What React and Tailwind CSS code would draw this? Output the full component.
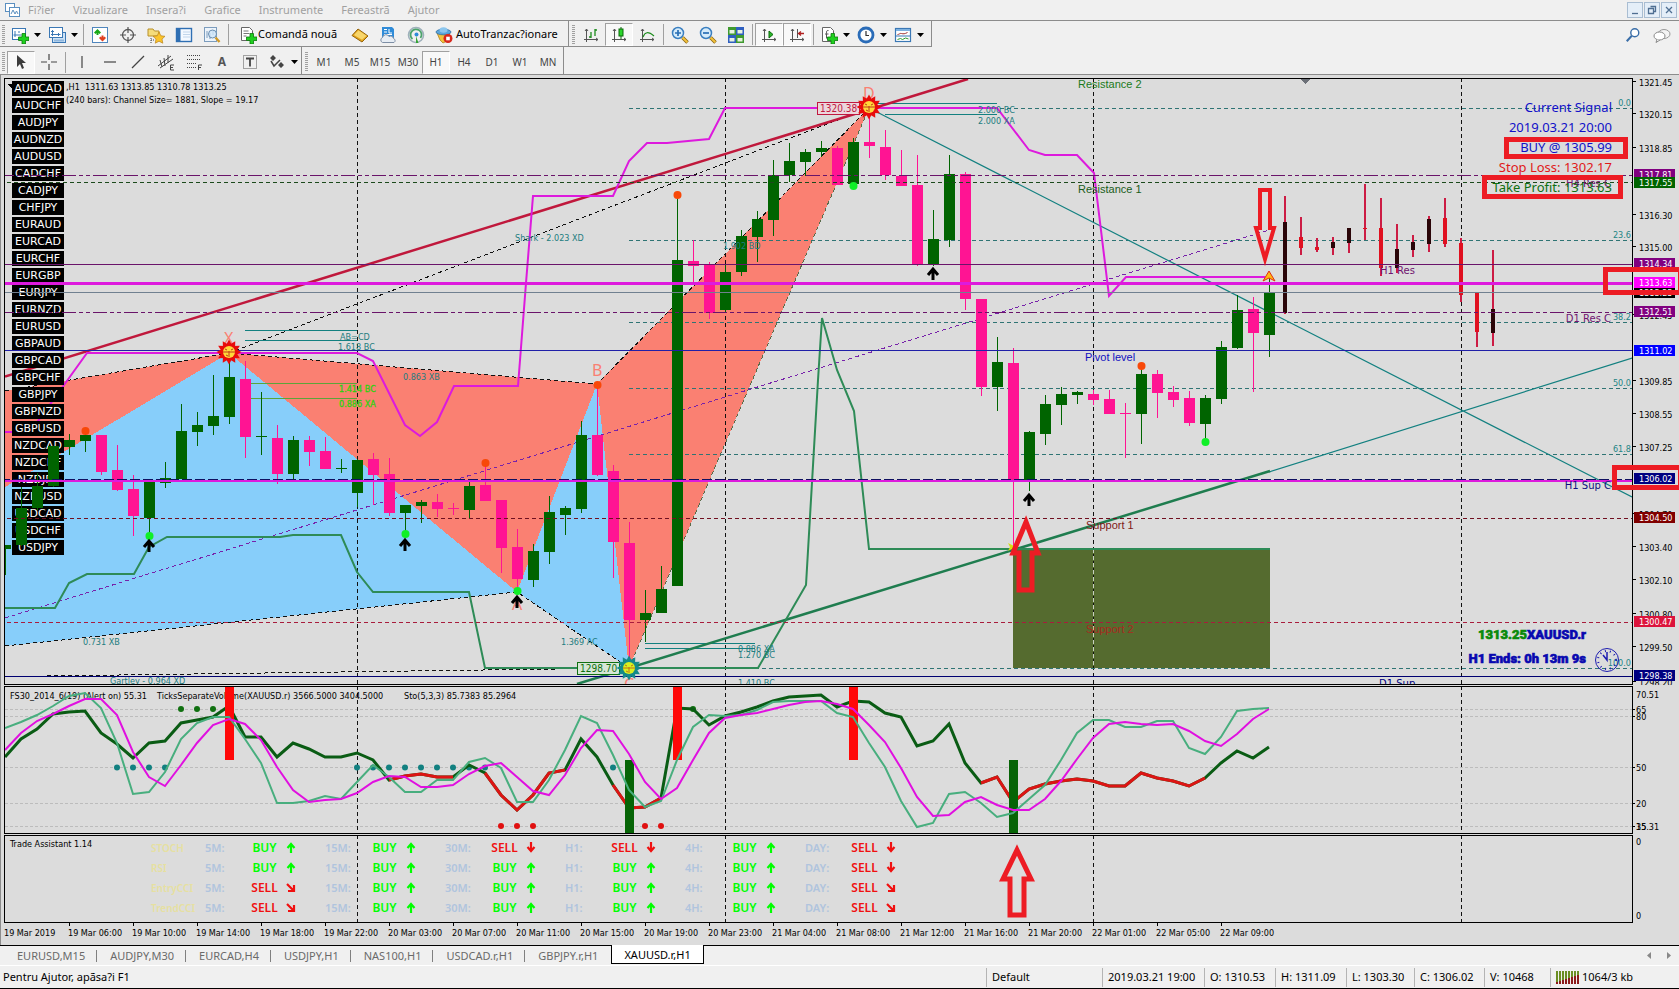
import React, { useState } from 'react';

const SYMBOLS = [
  'AUDCAD', 'AUDCHF', 'AUDJPY', 'AUDNZD', 'AUDUSD', 'CADCHF', 'CADJPY', 'CHFJPY', 'EURAUD', 'EURCAD',
  'EURCHF', 'EURGBP', 'EURJPY', 'EURNZD', 'EURUSD', 'GBPAUD', 'GBPCAD', 'GBPCHF', 'GBPJPY', 'GBPNZD',
  'GBPUSD', 'NZDCAD', 'NZDCHF', 'NZDJPY', 'NZDUSD', 'USDCAD', 'USDCHF', 'USDJPY',
];

const MENU = ['Fi?ier', 'Vizualizare', 'Insera?i', 'Grafice', 'Instrumente', 'Fereastrã', 'Ajutor'];
const TIMEFRAMES = ['M1', 'M5', 'M15', 'M30', 'H1', 'H4', 'D1', 'W1', 'MN'];
const TABS = ['EURUSD,M15', 'AUDJPY,M30', 'EURCAD,H4', 'USDJPY,H1', 'NAS100,H1', 'USDCAD.r,H1', 'GBPJPY.r,H1', 'XAUUSD.r,H1'];

const DATES = [
  '19 Mar 2019', '19 Mar 06:00', '19 Mar 10:00', '19 Mar 14:00', '19 Mar 18:00', '19 Mar 22:00',
  '20 Mar 03:00', '20 Mar 07:00', '20 Mar 11:00', '20 Mar 15:00', '20 Mar 19:00', '20 Mar 23:00',
  '21 Mar 04:00', '21 Mar 08:00', '21 Mar 12:00', '21 Mar 16:00', '21 Mar 20:00',
  '22 Mar 01:00', '22 Mar 05:00', '22 Mar 09:00',
];

// one candle per bar: [high, body top, body bottom, low, bullish]
const CANDLES = [
  [545, 545, 549, 575, 1], [487, 508, 545, 546, 1], [473, 486, 508, 510, 1], [446, 446, 486, 487, 1],
  [434, 440, 447, 455, 1], [432, 435, 441, 452, 1], [435, 435, 472, 475, 0], [445, 470, 490, 491, 0],
  [475, 489, 516, 536, 0], [482, 482, 518, 533, 1], [462, 478, 483, 488, 1], [404, 431, 479, 479, 1],
  [412, 425, 432, 446, 1], [375, 416, 426, 435, 1], [348, 377, 417, 424, 1], [361, 379, 437, 458, 0],
  [392, 436, 437, 455, 1], [425, 438, 474, 484, 0], [436, 440, 474, 479, 1], [436, 440, 452, 466, 0],
  [437, 451, 469, 469, 0], [459, 468, 469, 473, 1], [459, 460, 493, 507, 1], [453, 459, 475, 505, 0],
  [458, 474, 513, 516, 0], [505, 505, 513, 535, 1], [500, 502, 506, 523, 1], [494, 502, 509, 517, 0],
  [503, 508, 509, 515, 0], [481, 486, 510, 519, 1], [463, 485, 501, 501, 0], [500, 500, 548, 573, 0],
  [529, 547, 579, 593, 0], [544, 551, 580, 587, 1], [496, 512, 552, 564, 1], [506, 508, 515, 535, 1],
  [421, 435, 509, 513, 1], [385, 435, 475, 476, 0], [465, 471, 542, 578, 0], [522, 543, 620, 665, 0],
  [590, 613, 620, 642, 1], [566, 589, 613, 613, 1], [198, 260, 586, 586, 1], [240, 261, 266, 282, 0],
  [262, 264, 313, 319, 0], [265, 272, 310, 313, 1], [230, 236, 272, 276, 1], [211, 219, 237, 262, 1],
  [160, 175, 220, 236, 1], [143, 161, 175, 182, 1], [149, 152, 162, 176, 1], [141, 148, 152, 157, 1],
  [146, 148, 185, 185, 0], [138, 142, 184, 185, 1], [112, 142, 146, 158, 0], [130, 147, 175, 180, 0],
  [150, 176, 186, 186, 0], [155, 185, 265, 266, 0], [210, 239, 265, 266, 1], [155, 174, 240, 247, 1],
  [172, 174, 299, 310, 0], [299, 299, 387, 396, 0], [337, 362, 387, 411, 1], [348, 363, 481, 547, 0],
  [431, 432, 481, 491, 1], [395, 404, 434, 445, 1], [387, 394, 405, 425, 1], [391, 392, 395, 404, 1],
  [390, 394, 400, 405, 0], [390, 399, 414, 414, 0], [403, 413, 414, 458, 0], [367, 374, 414, 444, 1],
  [370, 374, 393, 418, 0], [386, 392, 400, 407, 0], [391, 398, 423, 426, 0], [395, 398, 424, 442, 1],
  [341, 347, 399, 404, 1], [295, 310, 348, 349, 1], [297, 309, 333, 392, 0], [275, 292, 335, 357, 1],
];

// [high, body top, body bottom, low, black body]
const FORECAST = [
  [196, 222, 313, 314, 1], [217, 237, 248, 255, 0], [238, 247, 250, 252, 0], [237, 242, 248, 255, 1],
  [228, 228, 243, 253, 1], [184, 228, 229, 240, 0], [198, 228, 268, 276, 0], [224, 249, 268, 273, 1],
  [235, 242, 250, 257, 1], [216, 219, 244, 252, 1], [198, 218, 244, 247, 0], [238, 243, 295, 302, 0],
  [293, 293, 332, 347, 0], [250, 309, 333, 346, 1],
];

const STOCH_MAIN = [
  728, 722, 715, 706, 696, 693, 708, 743, 794, 792, 772, 739, 723, 717, 717, 739, 763, 803, 803, 801,
  796, 799, 782, 765, 777, 792, 792, 780, 780, 762, 758, 768, 802, 802, 780, 750, 716, 723, 755, 790,
  807, 801, 760, 727, 715, 716, 715, 710, 702, 701, 701, 701, 713, 717, 743, 767, 801, 827, 823, 794,
  792, 803, 817, 813, 799, 785, 760, 733, 720, 720, 727, 727, 721, 721, 748, 754, 737, 711, 709, 708,
];

const STOCH_SIGNAL = [
  750, 733, 721, 714, 706, 699, 699, 715, 752, 777, 786, 765, 743, 725, 719, 724, 740, 767, 790, 802,
  800, 799, 793, 782, 776, 777, 787, 787, 785, 774, 766, 763, 777, 791, 795, 775, 748, 730, 731, 754,
  782, 799, 788, 760, 733, 718, 715, 713, 709, 705, 702, 701, 704, 709, 725, 742, 768, 797, 816, 815,
  802, 797, 805, 810, 810, 799, 781, 759, 738, 724, 722, 724, 725, 724, 731, 741, 746, 734, 719, 709,
];

const FS30 = [
  757, 739, 729, 714, 712, 711, 733, 744, 758, 743, 741, 723, 720, 717, 706, 737, 737, 757, 743, 749,
  757, 757, 753, 760, 780, 776, 774, 777, 777, 765, 773, 795, 810, 795, 773, 770, 739, 757, 785, 808,
  807, 798, 708, 709, 725, 716, 712, 707, 701, 697, 696, 695, 707, 701, 702, 713, 717, 746, 741, 724,
  763, 783, 777, 802, 789, 784, 781, 779, 781, 786, 786, 773, 778, 781, 786, 778, 763, 751, 758, 747,
];
// bar ranges where the FS30 line turns red
const FS30_RED = [[24, 28], [30, 35], [38, 41], [61, 75]];

const PRICES = [
  ['1321.45', 82], ['1320.15', 114], ['1318.85', 148], ['1316.30', 215], ['1315.00', 247], ['1312.45', 315],
  ['1309.85', 381], ['1308.55', 414], ['1307.25', 447], ['1304.70', 514], ['1303.40', 547], ['1302.10', 580],
  ['1300.80', 614], ['1299.50', 647], ['1298.20', 682],
];

const PRICE_BADGES = [
  ['1317.81', 174, '#800080'], ['1317.55', 182, '#006400'], ['1314.34', 263, '#800080'],
  ['1313.25', 292, '#000000'], ['1313.63', 282, '#ff00ff'], ['1312.51', 311, '#800080'],
  ['1311.02', 350, '#0000ff'], ['1306.02', 478, '#000080'], ['1304.50', 517, '#800000'],
  ['1300.47', 621, '#dc143c'], ['1298.38', 675, '#000080'],
];

const FIB = [['0.0', 108], ['23.6', 240], ['38.2', 322], ['50.0', 388], ['61.8', 454], ['100.0', 668]];

const PATTERN_LABELS = [
  ['AB=CD', 340, 340], ['1.618 BC', 338, 350], ['Shark - 2.023 XD', 515, 241], ['1.902 BD', 723, 249],
  ['0.731 XB', 83, 645], ['Gartley - 0.964 XD', 110, 684], ['1.369 AC', 561, 645], ['0.886 XA', 738, 652],
  ['1.270 BC', 738, 658], ['1.410 BC', 738, 686], ['2.000 BC', 978, 113], ['2.000 XA', 978, 124], ['0.863 XB', 403, 380],
];

const ASSISTANT = [
  ['STOCH', ['up', 'up', 'down', 'down', 'up', 'down']],
  ['RSI', ['up', 'up', 'up', 'up', 'up', 'down']],
  ['EntryCCI', ['drop', 'up', 'up', 'up', 'up', 'drop']],
  ['TrendCCI', ['drop', 'up', 'up', 'up', 'up', 'drop']],
];
const PERIODS = ['5M:', '15M:', '30M:', 'H1:', '4H:', 'DAY:'];

const DAY_LINES = [357, 725, 1093, 1461];

const barX = (i) => 5 + i * 16;
const series = (values, from = 0) => values.map((y, i) => `${barX(from + i)},${y}`).join(' ');

const chartFont = "font-['DejaVu_Sans_Condensed','Noto_Sans',sans-serif]";

/* ---------- toolbar ---------- */

const Grip = () => (
  <span className="w-[3px] h-5 mx-[2px] shrink-0 bg-[repeating-linear-gradient(#a0a0a0_0_1px,transparent_1px_2px)]" />
);
const Sep = () => <span className="w-px h-[21px] mx-[2px] shrink-0 bg-[#a0a0a0]" />;
const Caret = () => (
  <svg width="7" height="4" viewBox="0 0 7 4"><path d="M0 0h7L3.500 4z" fill="#000" /></svg>
);

const Tool = ({ label, pressed, wide, children }) => (
  <button
    type="button"
    aria-label={label}
    className={`h-[23px] shrink-0 flex items-center justify-center gap-[5px] ${wide ? 'w-[37px]' : 'w-7'} ${
      pressed ? 'bg-[#f8f8f8] border border-t-[#a0a0a0] border-l-[#a0a0a0] border-b-white border-r-white' : ''
    }`}
  >
    {children}
  </button>
);

const Svg = ({ size = 18, children }) => (
  <svg width={size} height={size} viewBox="0 0 18 18" fill="none" className="shrink-0">{children}</svg>
);

const Plus = () => (
  <path d="M11 7.500h3.500v3.500H18v3.500h-3.500V18H11v-3.500H7.500V11H11z" fill="#1fd01f" stroke="#0b7a0b" strokeWidth="0.800" />
);

const NewChartIcon = () => (
  <Svg>
    <rect x="1.500" y="2.500" width="13" height="11" fill="#fff" stroke="#3b78b5" />
    <path d="M4 5v6M2.500 9h8M8 5v2" stroke="#3b78b5" />
    <Plus />
  </Svg>
);
const ProfilesIcon = () => (
  <Svg>
    <rect x="4.500" y="6.500" width="13" height="10" fill="#cfe3f6" stroke="#3b78b5" />
    <path d="M6 14.500h10" stroke="#8fb6dd" strokeWidth="2" />
    <rect x="1.500" y="1.500" width="13" height="10" fill="#fff" stroke="#3b78b5" />
    <path d="M4.500 4v6M3 8.500h9.500M10.500 7v3M3 5.500h3" stroke="#3b78b5" />
  </Svg>
);
const MarketIcon = () => (
  <Svg>
    <rect x="1.500" y="1.500" width="15" height="15" fill="#fff" stroke="#4f86bd" />
    <path d="M6.500 3l3.500 3.500-1.500 1.500-1-1v2h-2V7l-1 1L3 6.500z" fill="#18a818" />
    <path d="M11.500 15.500L8 12l1.500-1.500 1 1v-2h2v2l1-1L15 12z" fill="#e04020" />
  </Svg>
);
const AimIcon = () => (
  <Svg>
    <circle cx="9" cy="9" r="5.500" stroke="#555" strokeWidth="1.300" />
    <path d="M9 1v6M9 11v6M1 9h6M11 9h6" stroke="#555" strokeWidth="1.200" />
  </Svg>
);
const FavIcon = () => (
  <Svg>
    <path d="M1 3h5l1.500 2H12v5H1z" fill="#f5dc7a" stroke="#b8902a" />
    <path d="M4 12v5M4 14h3" stroke="#444" strokeDasharray="1 1" />
    <path d="M12 6l1.900 3.800 4.100.5-3 2.800.8 4.100L12 15.200 8.300 17.200l.7-4.100-3-2.800 4.200-.5z" fill="#fbc42a" stroke="#b9821a" strokeWidth="0.700" />
  </Svg>
);
const NavIcon = () => (
  <Svg>
    <rect x="1.500" y="2.500" width="15" height="13" fill="#f4f9ff" stroke="#2f6fb3" strokeWidth="1.400" />
    <path d="M2 3h3.500v12H2z" fill="#2f6fb3" />
    <path d="M8 6h7M8 8.500h7M8 11h7" stroke="#b5cde6" strokeWidth="0.800" />
  </Svg>
);
const TesterIcon = () => (
  <Svg>
    <rect x="1.500" y="1.500" width="12" height="14" fill="#edf4fb" stroke="#7c9cbd" />
    <path d="M4 12V5M7 13V7M10 9V4" stroke="#7c9cbd" />
    <circle cx="9.500" cy="8" r="4" fill="#cfe6fa" fillOpacity="0.800" stroke="#6a8db0" />
    <path d="M12.500 11.500l4 4.500" stroke="#d09a2a" strokeWidth="2.400" />
  </Svg>
);
const OrderIcon = () => (
  <Svg>
    <path d="M2.500 1.500h8l3 3v10h-11z" fill="#fff" stroke="#666" />
    <path d="M4.500 5h5M4.500 7.500h6M4.500 10h3" stroke="#777" />
    <Plus />
  </Svg>
);
const BookIcon = () => (
  <Svg>
    <path d="M1 9.500L7 3l10 7-6 6z" fill="#e3a41c" stroke="#94640c" />
    <path d="M3 9L7.500 4.200l8 5.600-4.500 4z" fill="#f8d66b" />
  </Svg>
);
const CloudIcon = () => (
  <Svg>
    <path d="M3 1h10l2 2v9H3z" fill="#2f8bd8" />
    <path d="M5 3.500h3M5 6h3M5 8.500h8M10 3v4h3" stroke="#fff" />
    <path d="M3.500 16.500a2.700 2.700 0 010-5 3.500 3.500 0 016.500-1 3 3 0 014.500 2 2.200 2.200 0 01.5 4z" fill="#e7edf4" stroke="#7d8ea5" />
  </Svg>
);
const SignalIcon = () => (
  <Svg>
    <circle cx="9" cy="9" r="7.500" stroke="#9fb0bb" strokeWidth="1.600" />
    <path d="M5.500 13a5.500 5.500 0 118-1" stroke="#4aa36a" strokeWidth="1.800" />
    <circle cx="9.500" cy="8.500" r="2" fill="#2f8bd8" />
    <path d="M9 10l2.500 7H9z" fill="#35a435" />
  </Svg>
);
const RobotIcon = () => (
  <Svg>
    <path d="M2 7h13l-3 8-4 2-3-3z" fill="#f2c23c" stroke="#b3831c" strokeWidth="0.800" />
    <ellipse cx="8.500" cy="6" rx="7.500" ry="2.800" fill="#5aa5dc" stroke="#2e6fa5" strokeWidth="0.800" />
    <ellipse cx="8.500" cy="4" rx="4" ry="2.700" fill="#8cc6ee" />
    <circle cx="13" cy="12.500" r="4.500" fill="#d8281c" />
    <rect x="11.200" y="10.700" width="3.600" height="3.600" fill="#fff" />
  </Svg>
);
const AxisIcon = ({ children }) => (
  <Svg>
    <path d="M4.500 3v13M2 13.500h14M4.500 3l-1.500 2M4.500 3l1.500 2M16 13.500l-2-1.500M16 13.500l-2 1.500" stroke="#555" />
    {children}
  </Svg>
);
const ZoomIcon = ({ plus }) => (
  <Svg>
    <path d="M11.500 11.500l5 5" stroke="#8a6510" strokeWidth="3.600" />
    <path d="M11.500 11.500l4.800 4.800" stroke="#f2c23c" strokeWidth="2" />
    <circle cx="7" cy="7" r="5.500" fill="#d6ecfb" stroke="#3a7fc0" strokeWidth="1.500" />
    <path d={plus ? 'M4 7h6M7 4v6' : 'M4 7h6'} stroke="#2a6fb5" strokeWidth="1.700" />
  </Svg>
);
const TileIcon = () => (
  <Svg>
    <rect x="1" y="1" width="8" height="8" fill="#3f9a2f" />
    <rect x="9" y="1" width="8" height="8" fill="#2f5fc0" />
    <rect x="1" y="9" width="8" height="8" fill="#2f5fc0" />
    <rect x="9" y="9" width="8" height="8" fill="#3f9a2f" />
    <path d="M2.500 4h5v3.500h-5zM10.500 4h5v3.500h-5zM2.500 12h5v3.500h-5zM10.500 12h5v3.500h-5z" fill="#e8f2e0" />
  </Svg>
);
const IndicatorIcon = () => (
  <Svg>
    <path d="M2.500 1.500h8l3 3v11h-11z" fill="#fff" stroke="#666" />
    <path d="M8.500 4.500c-2-.5-2 1-2 3v5M5 8h3.500" stroke="#555" />
    <Plus />
  </Svg>
);
const ClockIcon = () => (
  <Svg>
    <circle cx="9" cy="9" r="7" fill="#fff" stroke="#2a6cb8" strokeWidth="2.800" />
    <path d="M9 5v4.500h3" stroke="#333" strokeWidth="1.200" />
  </Svg>
);
const TemplateIcon = () => (
  <Svg>
    <rect x="1.500" y="2.500" width="15" height="13" fill="#fff" stroke="#3b78b5" strokeWidth="1.200" />
    <path d="M2 3h14v2H2z" fill="#7fb2e0" />
    <path d="M3.500 8.500c2 0 2-1.500 4-1s3 .5 6-1" stroke="#a03030" />
    <path d="M2 10h14" stroke="#3b78b5" />
    <path d="M3.500 13.500l3-1 2 1 3-1.500 3 1" stroke="#2f9a2f" />
  </Svg>
);

const MainToolbar = () => (
  <div className="flex h-[27px] border-t border-[#8c8c8c]">
    <div className="flex items-center border-r border-b border-[#8c8c8c] pt-[2px] pr-[6px]">
      <Grip />
      <Tool label="Grafic nou" wide><NewChartIcon /><Caret /></Tool>
      <Tool label="Profile" wide><ProfilesIcon /><Caret /></Tool>
      <Sep />
      <Tool label="Market Watch"><MarketIcon /></Tool>
      <Tool label="Data Window"><AimIcon /></Tool>
      <Tool label="Navigator"><FavIcon /></Tool>
      <Tool label="Terminal"><NavIcon /></Tool>
      <Tool label="Strategy Tester"><TesterIcon /></Tool>
      <Sep />
      <button type="button" className="flex items-center gap-px h-[23px] w-[115px] pl-2 whitespace-nowrap">
        <OrderIcon />Comandã nouã
      </button>
      <Tool label="MetaEditor"><BookIcon /></Tool>
      <Tool label="VPS"><CloudIcon /></Tool>
      <Tool label="Semnale"><SignalIcon /></Tool>
      <button type="button" className="flex items-center gap-[3px] h-[23px] w-[132px] pl-[5px] whitespace-nowrap">
        <RobotIcon />AutoTranzac?ionare
      </button>
    </div>
    <div className="flex items-center border-r border-b border-[#8c8c8c] pt-[2px] pl-px pr-1">
      <Grip />
      <Tool label="Bare"><AxisIcon><path d="M9 6v6M9 11h-2M13 3v7M13 4h2" stroke="#1c8c1c" strokeWidth="1.300" /></AxisIcon></Tool>
      <Tool label="Candele" pressed><AxisIcon><path d="M11 1v12" stroke="#0a6a0a" /><rect x="9" y="3" width="4" height="7" fill="#2bd62b" stroke="#0a6a0a" /></AxisIcon></Tool>
      <Tool label="Linie"><AxisIcon><path d="M5 11c2-5 5-6 11-1" stroke="#1c8c1c" strokeWidth="1.200" /></AxisIcon></Tool>
      <Sep />
      <Tool label="Zoom in"><ZoomIcon plus /></Tool>
      <Tool label="Zoom out"><ZoomIcon /></Tool>
      <Tool label="Mozaic"><TileIcon /></Tool>
      <Sep />
      <Tool label="Auto scroll" pressed><AxisIcon><path d="M9 5l4 3.500-4 3.500z" fill="#2bb62b" stroke="#0a6a0a" /></AxisIcon></Tool>
      <Tool label="Chart shift" pressed><AxisIcon><path d="M9.500 3v9" stroke="#555" /><path d="M16 7.500h-5M13 5.500l-2.500 2 2.500 2" stroke="#b02020" strokeWidth="1.300" /></AxisIcon></Tool>
      <Sep />
      <Tool label="Indicatori" wide><IndicatorIcon /><Caret /></Tool>
      <Tool label="Perioade" wide><ClockIcon /><Caret /></Tool>
      <Tool label="Sabloane" wide><TemplateIcon /><Caret /></Tool>
    </div>
    <div className="flex-1 flex items-center justify-end gap-3 pt-[2px] pr-2">
      <button type="button" aria-label="Cautare">
        <Svg size={16}>
          <circle cx="11" cy="6.500" r="4.500" fill="#fff" stroke="#3a6ea8" strokeWidth="1.600" />
          <path d="M7.500 10L2 16" stroke="#3a6ea8" strokeWidth="2.400" />
        </Svg>
      </button>
      <button type="button" aria-label="Mesaje">
        <Svg>
          <ellipse cx="11" cy="8" rx="6" ry="4.500" fill="#f4f4f4" stroke="#999" />
          <ellipse cx="6.500" cy="10" rx="5.500" ry="4" fill="#fff" stroke="#888" />
          <path d="M4 13.500l-1 3 4-2.500" fill="#fff" stroke="#888" />
        </Svg>
      </button>
    </div>
  </div>
);

const DrawToolbar = ({ frame, setFrame }) => (
  <div className="flex h-7 border-b border-[#8c8c8c]">
    <div className="flex items-center border-r border-[#8c8c8c] pt-[3px]">
      <Grip />
      <Tool label="Cursor" pressed><Svg><path d="M5 2v12l3-3 2 5 2-1-2-5h4z" fill="#3c3c3c" /></Svg></Tool>
      <Tool label="Reticul"><Svg><path d="M9 1v6M9 11v6M1 9h6M11 9h6" stroke="#444" strokeWidth="1.200" /></Svg></Tool>
      <Sep />
      <Tool label="Linie verticala"><Svg><path d="M9 3v12" stroke="#444" strokeWidth="1.200" /></Svg></Tool>
      <Tool label="Linie orizontala"><Svg><path d="M3 9h12" stroke="#444" strokeWidth="1.200" /></Svg></Tool>
      <Tool label="Trend"><Svg><path d="M3 15L15 3" stroke="#444" strokeWidth="1.200" /></Svg></Tool>
      <Tool label="Canal">
        <Svg>
          <path d="M1 13L14 3M3 15L16 6M3 7l2 7M7 5l1 8M11 2l0 8" stroke="#444" />
          <path d="M17 12h-3.500v5H17M13.500 14.500H16" stroke="#444" />
        </Svg>
      </Tool>
      <Tool label="Fibonacci">
        <Svg>
          <path d="M2 2.500h14M2 6.500h14M2 10.500h10M2 14.500h9" stroke="#444" strokeDasharray="1 1" />
          <path d="M13.500 17v-5H17M13.500 14.500H16" stroke="#444" />
        </Svg>
      </Tool>
      <Tool label="Text"><span className="text-[12px] font-bold text-[#555]">A</span></Tool>
      <Tool label="Eticheta">
        <Svg>
          <rect x="2.500" y="2.500" width="13" height="13" stroke="#555" strokeDasharray="1 1" />
          <path d="M5 5.500h8M9 5.500v8" stroke="#444" strokeWidth="1.800" />
        </Svg>
      </Tool>
      <Tool label="Sageti" wide>
        <Svg>
          <path d="M2 5l3-3 3 3-3 3zM10 12l3-3 3 3-3 3z" fill="#444" />
          <path d="M3 8l3 5 6-6" stroke="#444" strokeWidth="1.500" />
        </Svg>
        <Caret />
      </Tool>
    </div>
    <div className="flex items-center border-r border-[#8c8c8c] pt-[3px] pl-px pr-px">
      <Grip />
      {TIMEFRAMES.map((tf) => (
        <button
          key={tf}
          type="button"
          onClick={() => setFrame(tf)}
          className={`w-7 h-[23px] text-[10px] text-[#444] ${
            tf === frame ? 'bg-[#f8f8f8] border border-t-[#a0a0a0] border-l-[#a0a0a0] border-b-white border-r-white' : ''
          }`}
        >
          {tf}
        </button>
      ))}
    </div>
  </div>
);

/* ---------- chart pieces ---------- */

const HLine = ({ y, color, dash, width = 1, from = 0 }) => (
  <line x1={from} x2="4000" y1={y + 0.5} y2={y + 0.5} stroke={color} strokeWidth={width} strokeDasharray={dash} />
);

const DayLines = ({ y1, y2 }) => DAY_LINES.map((x) => (
  <line key={x} x1={x + 0.5} x2={x + 0.5} y1={y1} y2={y2} stroke="#111" strokeDasharray="4 3" />
));

const Candle = ({ i, data }) => {
  const [high, top, bottom, low, bull] = data;
  const x = barX(i);
  return (
    <g fill={bull ? '#006400' : '#ff1493'}>
      <rect x={x} y={high} width="1" height={Math.max(low - high, 1)} />
      <rect x={x - 5} y={top} width="11" height={bottom - top} />
    </g>
  );
};

const Sun = ({ x, y, rays = '#e80c0c', core = '#ffd83a', face = '#c03a18' }) => (
  <g transform={`translate(${x} ${y})`} shapeRendering="auto">
    {[0, 30, 60, 90, 120, 150, 180, 210, 240, 270, 300, 330].map((a) => (
      <path key={a} d="M-3.500 -6L0 -12.500L3.500 -6z" fill={rays} transform={`rotate(${a})`} />
    ))}
    <circle r="7.500" fill={rays} />
    <circle r="6" fill={core} />
    <path d="M-6 0h12M0 -1v6M-4 -3l2 1M4 -3l-2 1M-3 3l2 1" stroke={face} fill="none" />
  </g>
);

const UpMark = ({ x, y }) => (
  <path
    d={`M${x} ${y + 13}V${y + 2}M${x - 5} ${y + 8}L${x} ${y + 2}L${x + 5} ${y + 8}`}
    stroke="#000"
    strokeWidth="3"
    fill="none"
    shapeRendering="auto"
  />
);

const PriceTag = ({ x, y, color, fill, children }) => (
  <g>
    <rect x={x + 0.5} y={y + 0.5} width="42" height="12" fill={fill} stroke={color} />
    <text x={x + 3} y={y + 10} fill={color} className="text-[10px]">{children}</text>
  </g>
);

const Backdrop = () => (
  <svg className="absolute inset-0 w-full h-full" shapeRendering="crispEdges">
    <g transform="translate(-5 -79)">
      <polygon points="5,391 229,353 5,487" fill="#fa8072" />
      <polygon points="5,487 229,353 517,592 5,646" fill="#87cefa" />
      <polygon points="229,353 597,384 517,592" fill="#fa8072" />
      <polygon points="517,592 597,384 629,668" fill="#87cefa" />
      <polygon points="597,384 629,668 869,108" fill="#fa8072" />
      <rect x="1013" y="549" width="257" height="119" fill="#556b2f" />

      <g stroke="#111" fill="none" strokeDasharray="4 3">
        <path d="M5 391L229 353L597 384L869 108M5 646L517 592L629 668" />
        <path d="M229 353L869 108M47 676L629 668" />
        <path d="M629 668L869 108" stroke="#5a6b4a" />
      </g>
      <DayLines y1="78" y2="690" />
      <line x1="1093.500" x2="1093.500" y1="549" y2="668" stroke="#c8d0c0" strokeDasharray="4 3" />

      {FIB.map(([label, y]) => <HLine key={label} y={y} color="#2f7474" dash="4 3" from={629} />)}
      <path d="M5 618L1269 230" stroke="#7722aa" strokeDasharray="4 3" fill="none" />

      <g stroke="#138080" fill="none">
        <path d="M245 330.500h112M245 340.500h112M875 103.500h122M885 114.500h112M645 643.500h110M645 648.500h110" />
        <path d="M869 108L1632 497M1269 472L1632 358" shapeRendering="auto" strokeWidth="1.200" />
      </g>
      <path d="M250 383.500h107M250 398.500h107" stroke="#5ba53a" />

      <g fill="none" strokeWidth="2" shapeRendering="auto">
        <path d="M5 376.500L968 79" stroke="#c0183c" strokeWidth="2.500" />
        <path d="M577 684L1270 471" stroke="#1f7d4f" strokeWidth="2.500" />
        <path
          d="M5 608H55L69 583L87 574H134L149 547L167 537H280L293 535H341L357 572L373 592H469L485 668H758L806 585L818 380L822 318L837 370L854 411L869 549H1270"
          stroke="#2e8b57"
        />
        <path
          d="M5 432H30L64 385L87 353H357L373 361L405 425L420 436L437 422L454 386H518L526 283L533 196H613L629 161L647 143H667L709 139L725 108H997L1029 150L1045 155H1077L1094 173L1109 296L1126 277H1265"
          stroke="#dd1add"
        />
      </g>
    </g>
  </svg>
);

const Foreground = () => (
  <svg className="absolute inset-0 w-full h-full pointer-events-none" shapeRendering="crispEdges">
    <g transform="translate(-5 -79)">
      {CANDLES.map((c, i) => <Candle key={i} i={i} data={c} />)}
      {FORECAST.map(([high, top, bottom, low, black], i) => (
        <g key={i}>
          <rect x={1284 + i * 16} y={high} width="2" height={low - high} fill="#cc1c44" />
          <rect x={1283 + i * 16} y={top} width="4" height={bottom - top} fill={black ? '#2a0508' : '#e01020'} />
        </g>
      ))}

      <HLine y={175} color="#6a146a" dash="14 3 4 3 4 3" />
      <HLine y={182} color="#1c4a1c" dash="4 3" />
      <HLine y={264} color="#6a146a" />
      <HLine y={283} color="#dd1add" width={3} />
      <HLine y={292} color="#708090" />
      <HLine y={312} color="#6a146a" dash="14 3 4 3 4 3" />
      <HLine y={350} color="#2020a8" />
      <HLine y={479} color="#101060" dash="10 3" />
      <line x1="0" x2="4000" y1="481" y2="481" stroke="#dd1add" strokeWidth="2" />
      <HLine y={518} color="#701020" dash="4 3" />
      <HLine y={622} color="#a81c3c" dash="4 3" />
      <HLine y={676} color="#000070" />

      {PATTERN_LABELS.map(([label, x, y]) => (
        <text key={label + y} x={x} y={y} fill="#1d7c80">{label}</text>
      ))}
      <g fill="#2fd010" stroke="#2fd010" strokeWidth="0.300">
        <text x="339" y="392">1.414 BC</text>
        <text x="339" y="407">0.886 XA</text>
      </g>
      <g className="font-['Liberation_Sans',sans-serif] text-[11px]">
        <text x="1078" y="88" fill="#1a7a1a">Resistance 2</text>
        <text x="1078" y="193" fill="#1a5c1a">Resistance 1</text>
        <text x="1085" y="361" fill="#1010c0">Pivot level</text>
        <text x="1086" y="529" fill="#801818">Support 1</text>
        <text x="1086" y="633" fill="#a82a20">Support 2</text>
      </g>
      <g className="font-['DejaVu_Sans',sans-serif] text-[10px]" fill="#701470">
        <text x="1380" y="274">H1 Res</text>
        <text x="1379" y="687" fill="#000080">D1 Sup</text>
      </g>
      <g className="font-['Noto_Sans',sans-serif] text-[16px]" fill="#fa8072">
        <text x="224" y="344">X</text>
        <text x="592" y="376">B</text>
        <text x="863" y="99">D</text>
        <text x="512" y="610">A</text>
        <text x="624" y="690">C</text>
      </g>
      <path d="M8 84h9l-4.500 5z" />
      <text x="66" y="90">,H1&nbsp; 1311.63 1313.85 1310.78 1313.25</text>
      <text x="66" y="103">(240 bars): Channel Size= 1881, Slope = 19.17</text>
      <path d="M1300 79h10l-5 5z" fill="#6c7078" />

      <PriceTag x={817} y={102} color="#c01840" fill="#ecd6dc">1320.38</PriceTag>
      <PriceTag x={577} y={662} color="#107010" fill="#d6e6d6">1298.70</PriceTag>

      <g shapeRendering="auto">
        {[[85, 431], [485, 463], [597, 385], [677, 195], [1141, 366]].map(([x, y]) => (
          <circle key={x} cx={x + 0.5} cy={y} r="4" fill="#f84808" />
        ))}
        {[[149, 536], [405, 534], [517, 591], [853, 186], [1205, 442]].map(([x, y]) => (
          <circle key={x} cx={x + 0.5} cy={y} r="4" fill="#10f028" />
        ))}
        <path d="M1269 271l6 10-6-3-6 3z" fill="#ffb810" stroke="#e03010" />
        <path d="M1008 543l8 4-8 4 2-4z" fill="#d8e010" />
      </g>
      <UpMark x={149} y={539} />
      <UpMark x={405} y={538} />
      <UpMark x={517} y={595} />
      <UpMark x={933} y={267} />
      <UpMark x={1029} y={493} />
      <Sun x={229} y={352} />
      <Sun x={869} y={107} />
      <Sun x={629} y={668} rays="#158a8a" core="#d8f020" face="#c07018" />
    </g>

    {/* labels tied to the right edge of the plot */}
    <svg x="100%" overflow="visible">
      <g transform="translate(-1 -79)" textAnchor="end" fill="#1d8585">
        {FIB.map(([label, y]) => <text key={label} x="0" y={y - 2}>{label}</text>)}
        <g className="font-['DejaVu_Sans',sans-serif] text-[10px]" fill="#701470">
          <text x="-20" y="187">H4 Res C</text>
          <text x="-20" y="322">D1 Res C</text>
          <text x="-20" y="489" fill="#101080">H1 Sup C</text>
        </g>
        <g className="font-['Roboto',sans-serif] text-[13px] font-black" fill="#0808b0" stroke="#0808b0" strokeWidth="0.600" shapeRendering="auto">
          <text x="-45" y="639"><tspan fill="#0a8a0a" stroke="#0a8a0a">1313.25</tspan>XAUUSD.r</text>
          <text x="-45" y="663">H1 Ends: 0h 13m 9s</text>
        </g>
        <g stroke="#1c1cb0" fill="none" shapeRendering="auto">
          <circle cx="-24" cy="660" r="11.500" />
          <circle cx="-24" cy="660" r="9" strokeDasharray="1 4" strokeWidth="2" />
          <path d="M-24 652v8l-4 -5" strokeWidth="1.500" />
        </g>
      </g>
    </svg>
  </svg>
);

const Badge = ({ label, y, color }) => (
  <g>
    <rect x="1" y={y - 5} width="41" height="11" fill={color} />
    <text x="6" y={y + 4} fill="#fff">{label}</text>
  </g>
);

const PricePanel = ({ symbol, setSymbol }) => (
  <div className="flex h-[607px]">
    <div className="relative flex-1 overflow-hidden border border-black">
      <Backdrop />
      <div className="absolute left-[7px] top-[2px] flex flex-col gap-[2px]">
        {SYMBOLS.map((s) => (
          <button
            key={s}
            type="button"
            aria-pressed={s === symbol}
            onClick={() => setSymbol(s)}
            className="h-[15px] w-[52px] bg-black text-center font-['DejaVu_Sans',sans-serif] text-[11px] leading-[15px] text-white"
          >
            {s}
          </button>
        ))}
      </div>
      <Foreground />
      <div className="absolute right-5 top-[18px] text-right font-['Noto_Sans',sans-serif] text-[13px] leading-5 text-[#1010c8]">
        <p>Current Signal</p>
        <p>2019.03.21 20:00</p>
        <p>BUY @ 1305.99</p>
        <p className="text-[#e01818]">Stop Loss: 1302.17</p>
        <p className="text-[#107010]">Take Profit: 1313.63</p>
      </div>
      <span className="absolute right-[4px] top-[58px] h-[22px] w-[124px] border-[5px] border-[#ed1c24]" />
      <span className="absolute right-[9px] top-[96px] h-6 w-[141px] border-[5px] border-[#ed1c24]" />
    </div>
    <svg className="w-[46px] h-full" shapeRendering="crispEdges">
      <g transform="translate(0 -78)">
        {PRICES.map(([label, y]) => (
          <g key={label}>
            <path d={`M0 ${y - 0.5}h3`} stroke="#000" />
            <text x="6" y={y + 4}>{label}</text>
          </g>
        ))}
        {PRICE_BADGES.map(([label, y, color]) => <Badge key={label} label={label} y={y} color={color} />)}
      </g>
    </svg>
  </div>
);

const OscillatorPanel = () => (
  <div className="flex h-[148px]">
    <div className="relative flex-1 overflow-hidden border border-black">
      <svg className="absolute inset-0 w-full h-full" shapeRendering="crispEdges">
        <g transform="translate(-5 -687)">
          {[709, 716, 767, 803, 826].map((y) => <HLine key={y} y={y} color="#bcbcbc" dash="3 2" />)}
          <DayLines y1="686" y2="834" />
          <g shapeRendering="auto">
            {[7, 8, 9, 10, 22, 23, 24, 25, 26, 27, 28, 29, 30, 38].map((i) => <circle key={i} cx={barX(i)} cy="767.500" r="3" fill="#128080" />)}
            {[11, 12, 13, 43].map((i) => <circle key={i} cx={barX(i)} cy="709" r="3" fill="#107010" />)}
            {[31, 32, 33, 40, 41].map((i) => <circle key={i} cx={barX(i)} cy="826" r="3" fill="#e01010" />)}
          </g>
          <g fill="none" shapeRendering="auto">
            <polyline points={series(FS30)} stroke="#0a5c14" strokeWidth="3" />
            {FS30_RED.map(([from, to]) => (
              <polyline key={from} points={series(FS30.slice(from, to + 1), from)} stroke="#dd1414" strokeWidth="3" />
            ))}
          </g>
          <text x="10" y="699">FS30_2014_6(19) (Alert on) 55.31</text>
          <text x="157" y="699">TicksSeparateVolume(XAUUSD.r) 3566.5000 3404.5000</text>
          <text x="404" y="699">Sto(5,3,3) 85.7383 85.2964</text>
          <g fill="#ff0808">
            <rect x="225" y="686" width="9" height="74" />
            <rect x="673" y="686" width="9" height="74" />
            <rect x="849" y="686" width="9" height="74" />
          </g>
          <g fill="#066406">
            <rect x="625" y="760" width="9" height="74" />
            <rect x="1009" y="760" width="9" height="74" />
          </g>
          <g fill="none" strokeWidth="2" shapeRendering="auto">
            <polyline points={series(STOCH_MAIN)} stroke="#48ae7e" />
            <polyline points={series(STOCH_SIGNAL)} stroke="#e010e0" />
          </g>
        </g>
      </svg>
    </div>
    <svg className="w-[46px] h-full">
      <g transform="translate(0 -686)">
        {[['70.51', 694], ['65', 709], ['80', 716], ['50', 767], ['20', 803], ['35', 826], ['15.31', 826]].map(([label, y]) => (
          <text key={label} x="3" y={y + 4}>{label}</text>
        ))}
        <path d="M0 709.500h2M0 716.500h2M0 767.500h2M0 803.500h2M0 826.500h2" stroke="#000" />
      </g>
    </svg>
  </div>
);

const ARROWS = {
  up: 'M5 11V2M1.500 6L5 2l3.500 4',
  down: 'M5 0v9M1.500 5L5 9l3.500-4',
  drop: 'M1 2l6.500 6.500M8 3v6H2',
};

const AssistantPanel = () => (
  <div className="flex h-[88px]">
    <div className="relative flex-1 overflow-hidden border border-black">
      <svg className="absolute inset-0 w-full h-full" shapeRendering="crispEdges">
        <g transform="translate(-5 -836)"><DayLines y1="835" y2="923" /></g>
      </svg>
      <div className="relative flex">
        <p className="w-[146px] shrink-0 pl-[5px] leading-4">Trade Assistant 1.14</p>
        <table className="table-fixed font-['Noto_Sans',sans-serif] text-[12px] mt-[2px]">
          <tbody>
            {ASSISTANT.map(([name, signals]) => (
              <tr key={name} className="h-5">
                <th scope="row" className="w-[54px] p-0 text-left text-[10px] font-semibold text-[#e6e0a0]">{name}</th>
                {signals.map((signal, i) => (
                  <td key={i} className="w-[120px] p-0">
                    <span className="flex items-center">
                      <span className="w-[44px] text-[11px] font-semibold text-[#b0c4de]">{PERIODS[i]}</span>
                      <span className={`w-[31px] text-center font-semibold ${signal === 'up' ? 'text-[#00ff00]' : 'text-[#f01010]'}`}>
                        {signal === 'up' ? 'BUY' : 'SELL'}
                      </span>
                      <svg className="ml-[6px]" width="10" height="12" viewBox="0 0 10 12" fill="none">
                        <path d={ARROWS[signal]} stroke={signal === 'up' ? '#00ff00' : '#f01010'} strokeWidth="2.200" />
                      </svg>
                    </span>
                  </td>
                ))}
              </tr>
            ))}
          </tbody>
        </table>
      </div>
    </div>
    <div className="w-[46px] flex flex-col justify-between pl-[3px] leading-[14px]">
      <span>0</span>
      <span>0</span>
    </div>
  </div>
);

const TimeAxis = () => (
  <div className="flex h-[22px] overflow-hidden leading-5">
    {DATES.map((d, i) => (
      <span key={d} className="relative w-16 shrink-0 whitespace-nowrap">
        {i > 0 && <span className="absolute left-px top-0 h-[3px] w-px bg-black" />}
        {d}
      </span>
    ))}
  </div>
);

const Notes = () => (
  <>
    <svg className="absolute inset-0 w-full h-full pointer-events-none" fill="none" stroke="#ed1c24" strokeWidth="5">
      <g transform="translate(-1 -75)">
        <path d="M1260 190h10v38h4L1265 259L1256 228h4z" strokeWidth="4" />
        <path d="M1026 522L1038 553h-6v37h-13v-37h-6z" />
        <path d="M1017 850L1031 879h-7v36h-14v-36h-7z" />
      </g>
    </svg>
    <span className="absolute -right-1 top-[192px] h-7 w-[80px] border-[5px] border-[#ed1c24]" />
    <span className="absolute -right-1 top-[390px] h-[25px] w-[71px] border-[5px] border-[#ed1c24]" />
  </>
);

const TabBar = ({ tab, setTab }) => (
  <div role="tablist" className="flex gap-px h-5 border-t border-black pl-[5px] text-[#6a6a6a]">
    {TABS.map((t, i) => (
      <button
        key={t}
        type="button"
        role="tab"
        aria-selected={t === tab}
        onClick={() => setTab(t)}
        className={
          t === tab
            ? 'h-[19px] -mt-px px-[12px] bg-white border border-t-0 border-black text-black leading-[17px]'
            : `relative h-[19px] px-[12px] leading-[17px] after:absolute after:right-0 after:top-1 after:h-3 after:w-px ${i < TABS.length - 2 ? 'after:bg-[#808080]' : ''}`
        }
      >
        {t}
      </button>
    ))}
    <span className="ml-auto flex items-center gap-4 pr-2">
      <svg width="4" height="7" viewBox="0 0 4 7"><path d="M4 0v7L0 3.500z" fill="#888" /></svg>
      <svg width="4" height="7" viewBox="0 0 4 7"><path d="M0 0v7l4-3.500z" fill="#888" /></svg>
    </span>
  </div>
);

const StatusCell = ({ width, children }) => (
  <span className={`${width} shrink-0 flex items-center gap-[3px] h-[19px] pl-[5px] border-l border-[#b4b4b4] whitespace-nowrap`}>{children}</span>
);

const StatusBar = () => (
  <div className="flex items-center h-6 border-t border-t-white border-b border-b-black pl-[3px]">
    <span className="flex-1">Pentru Ajutor, apãsa?i F1</span>
    <StatusCell width="w-[116px]">Default</StatusCell>
    <StatusCell width="w-[102px]">2019.03.21 19:00</StatusCell>
    <StatusCell width="w-[71px]">O: 1310.53</StatusCell>
    <StatusCell width="w-[71px]">H: 1311.09</StatusCell>
    <StatusCell width="w-[68px]">L: 1303.30</StatusCell>
    <StatusCell width="w-[70px]">C: 1306.02</StatusCell>
    <StatusCell width="w-[66px]">V: 10468</StatusCell>
    <StatusCell width="w-[129px]">
      <svg width="23" height="13" viewBox="0 0 23 13">
        {[0, 1, 2, 3, 4, 5, 6, 7].map((i) => (
          <g key={i}>
            <rect x={i * 3} y="0" width="2" height={11 - i} fill="#6b8e23" />
            <rect x={i * 3} y={11 - i} width="2" height={2 + i} fill="#8b1a1a" />
          </g>
        ))}
      </svg>
      1064/3 kb
    </StatusCell>
  </div>
);

const App = () => {
  const [frame, setFrame] = useState('H1');
  const [symbol, setSymbol] = useState('XAUUSD.r');
  const [tab, setTab] = useState('XAUUSD.r,H1');

  return (
    <div className="min-h-screen flex flex-col overflow-hidden bg-[#f0f0f0] font-['Noto_Sans',sans-serif] text-[11px] text-black">
      {/* Menu */}
      <div className="flex items-center h-5 pl-[5px] text-[#a0a0a0]">
        <svg width="15" height="14" viewBox="0 0 15 14" fill="#fff" stroke="#5a8fc0">
          <rect x="0.500" y="0.500" width="9" height="8" />
          <rect x="4.500" y="4.500" width="10" height="9" />
          <path d="M6 11l2-4 2 4 1.500-3 1.500 3" fill="none" />
        </svg>
        <nav className="flex gap-[18px] ml-2">
          {MENU.map((m) => <button key={m} type="button">{m}</button>)}
        </nav>
        <div className="ml-auto flex gap-px pr-[2px]">
          {['M4 10.500h6', 'M5.500 3.500h5v5h-2M3.500 5.500h5v5h-5z', 'M4 4l6 6M10 4l-6 6'].map((d) => (
            <button key={d} type="button" aria-label="Fereastra" className="border border-[#a9bdd2] bg-[#e4eef8]">
              <svg width="14" height="14" viewBox="0 0 14 14" fill="none" stroke="#4f6f92" strokeWidth="1.300"><path d={d} /></svg>
            </button>
          ))}
        </div>
      </div>
      <MainToolbar />
      <DrawToolbar frame={frame} setFrame={setFrame} />

      {/* Chart window */}
      <main className={`relative overflow-hidden bg-[#dcdcdc] pt-[3px] pl-[3px] border-l border-[#8c8c8c] text-[9px] ${chartFont}`}>
        <div className="flex flex-col gap-px">
          <PricePanel symbol={symbol} setSymbol={setSymbol} />
          <OscillatorPanel />
          <AssistantPanel />
        </div>
        <TimeAxis />
        <Notes />
      </main>

      <TabBar tab={tab} setTab={setTab} />
      <StatusBar />
    </div>
  );
};

export default App;
